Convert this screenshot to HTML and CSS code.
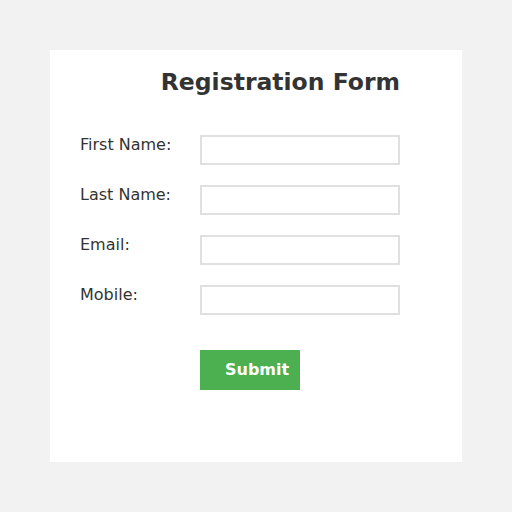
FILE: index.html
```html
<!DOCTYPE html>
<html>
<head>
<meta charset="utf-8">
<link rel="stylesheet" href="styles.css">
</head>
<body>
<div class="card">
  <h1 class="title">Registration Form</h1>
  <form class="form">
    <label class="label" for="fn">First Name:</label>
    <input class="input" id="fn" type="text">
    <label class="label" for="ln">Last Name:</label>
    <input class="input" id="ln" type="text">
    <label class="label" for="em">Email:</label>
    <input class="input" id="em" type="text">
    <label class="label" for="mo">Mobile:</label>
    <input class="input" id="mo" type="text">
    <div class="actions">
      <button class="submit" type="button">Submit</button>
    </div>
  </form>
</div>
</body>
</html>
```
FILE: styles.css
```css
html, body {
  margin: 0;
  padding: 0;
  background: #f2f2f2;
  font-family: "DejaVu Sans", sans-serif;
  color: #333;
}
body {
  padding: 50px;
}
.card {
  box-sizing: border-box;
  width: 412px;
  height: 412px;
  background: #fff;
  padding: 18px 30px 30px 30px;
}
.title {
  margin: 0 0 39px 0;
  font-size: 23.5px;
  font-weight: bold;
  color: #333;
  width: 320px;
  text-align: right;
}
.form {
  display: grid;
  grid-template-columns: 120px 200px;
  row-gap: 20px;
}
.label {
  font-size: 16px;
  padding-top: 0;
  align-self: start;
}
.input {
  box-sizing: border-box;
  width: 200px;
  height: 30px;
  border: 2px solid #e0e0e0;
  margin: 0;
  padding: 0 6px;
  background: #fff;
  outline: none;
}
.actions {
  grid-column: 2;
  padding-top: 15px;
}
.submit {
  box-sizing: border-box;
  width: 100px;
  height: 40px;
  border: none;
  background: #4caf50;
  color: #fff;
  font-family: "DejaVu Sans", sans-serif;
  font-size: 16px;
  font-weight: bold;
  text-align: left;
  padding: 0 0 2px 25px;
  margin: 0;
}
```
